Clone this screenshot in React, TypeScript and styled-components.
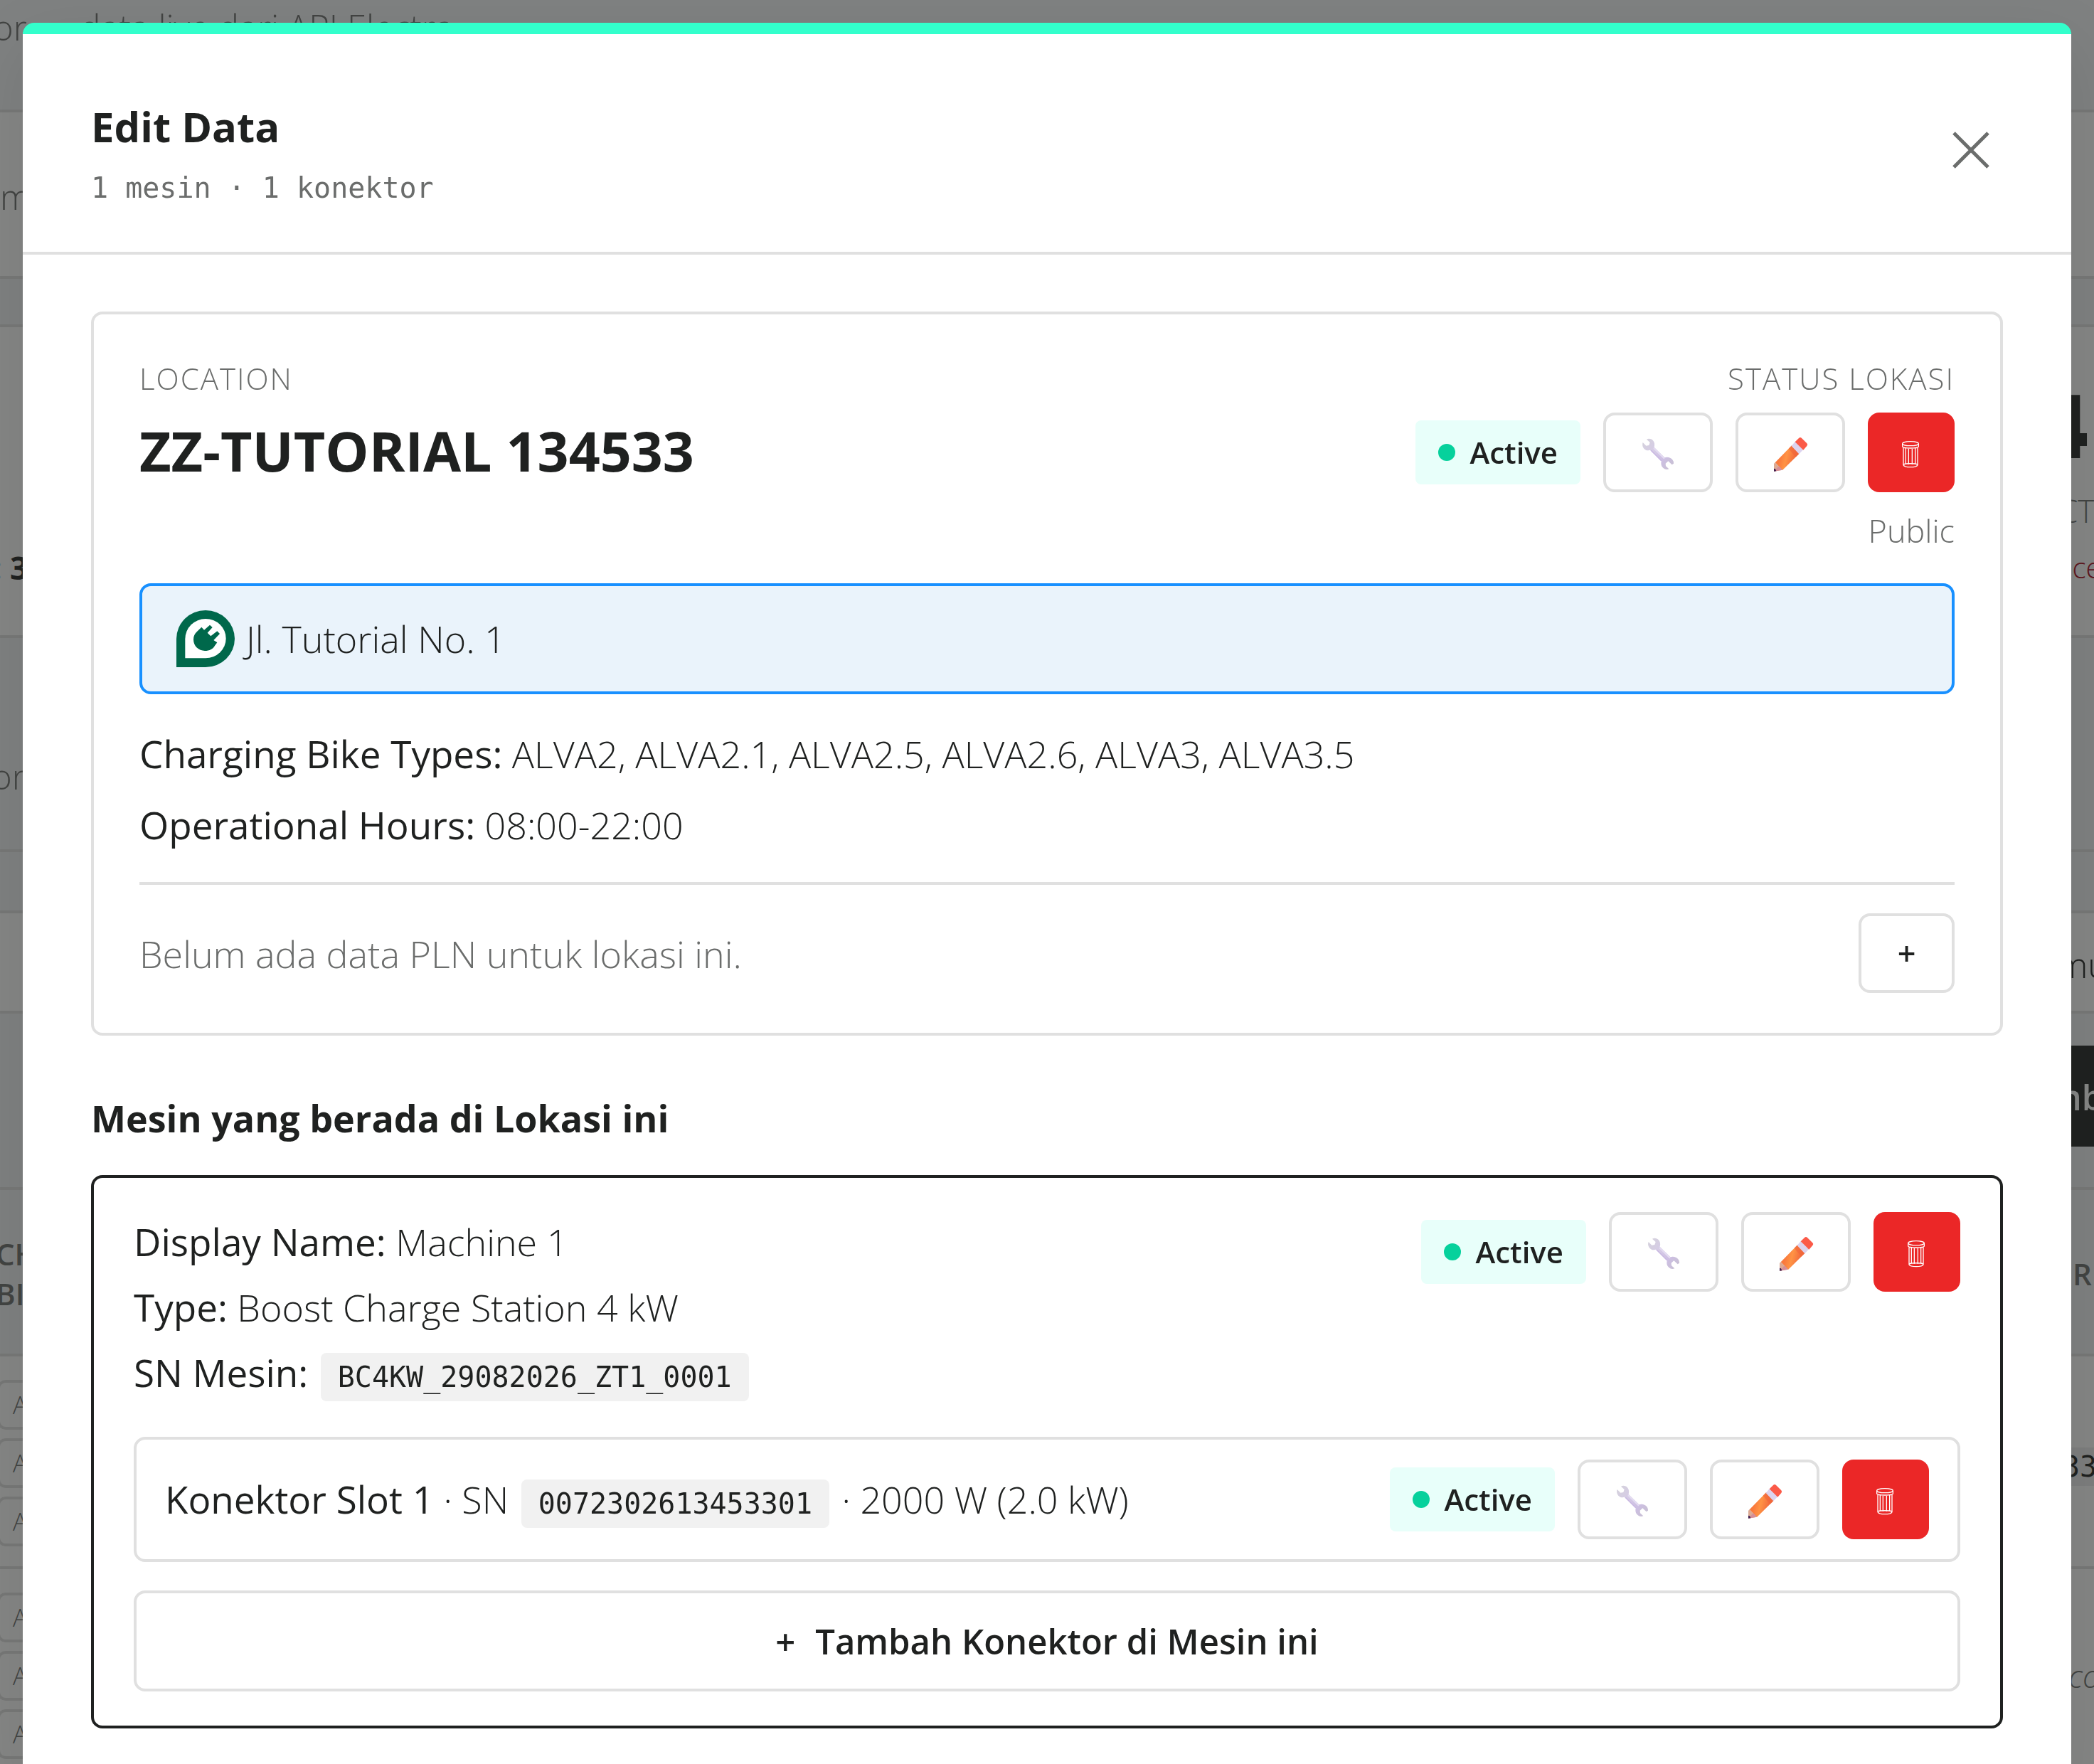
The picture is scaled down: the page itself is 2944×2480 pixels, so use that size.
import React from "react";
import styled, { createGlobalStyle } from "styled-components";

const INK = "#1f2120";
const MUTED = "#6b6d6c";
const LINE = "#e0e0e0";
const SANS = '"Open Sans", "Noto Sans", sans-serif';
const MONO = '"DejaVu Sans Mono", "Liberation Mono", monospace';

const GlobalStyle = createGlobalStyle`
  *, *::before, *::after { box-sizing: border-box; }
  html, body { margin: 0; height: 100%; overflow: hidden; }
  body {
    background: #f7f8fa;
    color: ${INK};
    font-family: ${SANS};
    font-size: 52px;
    font-weight: 300;
  }
  h1, h2, h3, p { margin: 0; }
  button { font: inherit; color: inherit; cursor: pointer; }
`;

/* ---------- dashboard behind the dialog ---------- */

const Page = styled.main`
  height: 100vh;
  overflow: hidden;
`;

const Band = styled.section<{ $height: number; $card?: boolean }>`
  display: flex;
  justify-content: space-between;
  height: ${(p) => p.$height}px;
  border-bottom: 4px solid ${LINE};
  background: ${(p) => (p.$card ? "#ffffff" : "#f2f3f5")};
  overflow: hidden;
  white-space: nowrap;
`;

const Side = styled.div<{ $top?: number; $gap?: number; $end?: boolean }>`
  display: flex;
  flex-direction: column;
  flex: none;
  gap: ${(p) => p.$gap ?? 0}px;
  width: ${(p) => (p.$end ? "96px" : "auto")};
  padding-top: ${(p) => p.$top ?? 0}px;
`;

const Snippet = styled.span<{ $size?: number; $weight?: number; $color?: string; $italic?: boolean; $indent?: number }>`
  margin-left: ${(p) => p.$indent ?? 0}px;
  font-size: ${(p) => p.$size ?? 49}px;
  line-height: 56px;
  font-weight: ${(p) => p.$weight ?? 300};
  font-style: ${(p) => (p.$italic ? "italic" : "normal")};
  color: ${(p) => p.$color ?? MUTED};
`;

const BigNumber = styled.span`
  align-self: flex-end;
  padding-right: 8px;
  font-size: 124px;
  line-height: 140px;
  font-weight: 800;
`;

const DarkButton = styled.div`
  height: 142px;
  padding: 44px 0 0 32px;
  background: ${INK};
  color: #ffffff;
  font-size: 49px;
  line-height: 56px;
  font-weight: 600;
`;

const SerialCell = styled.span`
  height: 54px;
  padding-left: 52px;
  background: #ececee;
  font-family: ${MONO};
  font-size: 40px;
  line-height: 54px;
  color: ${INK};
`;

const Pills = styled.div`
  display: flex;
  flex-direction: column;
  gap: 12px;
`;

const Pill = styled.span`
  height: 70px;
  width: 200px;
  margin-left: -4px;
  padding-left: 18px;
  border: 4px solid ${LINE};
  border-radius: 12px;
  font-size: 34px;
  line-height: 62px;
  color: ${MUTED};
`;

/* ---------- dialog ---------- */

const Overlay = styled.div`
  position: fixed;
  inset: 0;
  padding: 32px 32px 0;
  background: rgba(32, 34, 32, 0.55);
  overflow: hidden;
`;

const Dialog = styled.div`
  min-height: 100%;
  border-top: 16px solid #33ffcc;
  border-radius: 16px 16px 0 0;
  background: #ffffff;
  box-shadow: 0 32px 96px rgba(0, 0, 0, 0.1);
`;

const DialogHeader = styled.header`
  display: flex;
  justify-content: space-between;
  align-items: flex-start;
  padding: 88px 96px 62px;
  border-bottom: 4px solid ${LINE};
`;

const HeaderText = styled.div`
  display: grid;
  gap: 16px;
`;

const DialogTitle = styled.h1`
  font-size: 58px;
  line-height: 84px;
  font-weight: 700;
`;

const Summary = styled.p`
  font-family: ${MONO};
  font-size: 40px;
  line-height: 56px;
  font-weight: 400;
  color: ${MUTED};
`;

const CloseButton = styled.button`
  display: grid;
  place-items: center;
  width: 90px;
  height: 150px;
  padding: 0;
  border: 0;
  background: none;
  color: ${MUTED};
`;

const DialogBody = styled.div`
  padding: 80px 96px;
`;

const LocationCard = styled.section`
  padding: 56px 64px;
  border: 4px solid ${LINE};
  border-radius: 16px;
`;

const SplitRow = styled.div`
  display: flex;
  justify-content: space-between;
  align-items: flex-start;
`;

const Stack = styled.div<{ $end?: boolean }>`
  display: flex;
  flex-direction: column;
  align-items: ${(p) => (p.$end ? "flex-end" : "flex-start")};
  gap: 12px;
`;

const Eyebrow = styled.span`
  font-size: 42px;
  line-height: 68px;
  padding-bottom: 2px;
  letter-spacing: 2px;
  text-transform: uppercase;
  color: ${MUTED};
`;

const LocationName = styled.h2`
  font-size: 77px;
  line-height: 108px;
  font-weight: 700;
`;

const Visibility = styled.span`
  font-size: 45px;
  line-height: 84px;
  color: ${MUTED};
`;

const Actions = styled.div`
  display: flex;
  align-items: center;
  gap: 32px;
`;

const StatusBadge = styled.span`
  display: flex;
  align-items: center;
  gap: 20px;
  padding: 12px 32px;
  border-radius: 8px;
  background: #e8fffa;
  font-size: 42px;
  line-height: 66px;
  font-weight: 600;

  &::before {
    content: "";
    width: 24px;
    height: 24px;
    border-radius: 50%;
    background: #06d19c;
  }
`;

const ActionButton = styled.button<{ $danger?: boolean; $width?: number }>`
  display: grid;
  place-items: center;
  width: ${(p) => p.$width ?? (p.$danger ? 122 : 154)}px;
  height: 112px;
  padding: 0;
  border: ${(p) => (p.$danger ? "0" : `4px solid ${LINE}`)};
  border-radius: 16px;
  background: ${(p) => (p.$danger ? "#eb2727" : "#ffffff")};
  font-size: 45px;
  line-height: 64px;
  font-weight: 600;
`;

const AddressBar = styled.div`
  display: flex;
  align-items: center;
  gap: 16px;
  margin-top: 32px;
  padding: 34px 48px;
  border: 4px solid #1890ff;
  border-radius: 16px;
  background: #eaf3fb;
  line-height: 80px;
`;

const Facts = styled.div<{ $gap: number }>`
  display: flex;
  flex-direction: column;
  gap: ${(p) => p.$gap}px;
`;

const LocationFacts = styled(Facts)`
  margin-top: 40px;
  padding-bottom: 36px;
  border-bottom: 4px solid ${LINE};
`;

const Fact = styled.p<{ $line: number }>`
  line-height: ${(p) => p.$line}px;
`;

const Label = styled.strong`
  font-size: 53px;
  font-weight: 400;
`;

const EmptyRow = styled.div`
  display: flex;
  justify-content: space-between;
  align-items: center;
  padding-top: 40px;
  color: ${MUTED};

  button { color: ${INK}; }
`;

const SectionTitle = styled.h2`
  margin: 72px 0 36px;
  font-size: 52px;
  line-height: 88px;
  font-weight: 700;
`;

const MachineCard = styled.section`
  padding: 48px 56px;
  border: 4px solid ${INK};
  border-radius: 16px;
`;

const Serial = styled.code`
  margin: 0 4px;
  padding: 11px 24px;
  border-radius: 8px;
  background: #f1f1f1;
  font-family: ${MONO};
  font-size: 40px;
  line-height: 60px;
  font-weight: 400;
`;

const ConnectorRow = styled.div`
  display: flex;
  justify-content: space-between;
  align-items: center;
  margin-top: 48px;
  padding: 28px 40px;
  border: 4px solid ${LINE};
  border-radius: 16px;
`;

const AddButton = styled.button`
  display: flex;
  justify-content: center;
  align-items: center;
  gap: 28px;
  width: 100%;
  height: 142px;
  margin-top: 40px;
  border: 4px solid ${LINE};
  border-radius: 16px;
  background: #ffffff;
  font-size: 49px;
  font-weight: 600;
`;

/* ---------- drawings ---------- */

const WrenchIcon = () => (
  <svg width="52" height="52" viewBox="198 120 156 156" aria-hidden="true">
    <defs>
      <linearGradient id="wrench" x1="210" y1="150" x2="342" y2="270" gradientUnits="userSpaceOnUse">
        <stop offset="0" stopColor="#d5d2dc" />
        <stop offset="0.35" stopColor="#d6cce6" />
        <stop offset="0.65" stopColor="#cdbfe3" />
        <stop offset="1" stopColor="#c6c0cf" />
      </linearGradient>
    </defs>
    <path
      fill="url(#wrench)"
      d="M228 143q9-5 18-1c11 4 17 16 15 28l-1 6 44 44 6-1c10-2 21 3 27 10q6 7 5 16l-7 5-16-15-11 10 1 11 13 12c-10 4-20 1-26-6-7-7-8-16-6-27l-48-47-7 2c-10 1-21-7-24-19q-2-8 1-15l14 14 12-2 4-12z"
    />
    <path d="M258 180l45 44" stroke="#e4dcf2" strokeWidth="6" fill="none" />
    <path d="M247 190l43 43" stroke="#c8b7e2" strokeWidth="4" fill="none" />
  </svg>
);

const PencilIcon = () => (
  <svg width="52" height="52" viewBox="753 120 156 156" overflow="visible" aria-hidden="true">
    <defs>
      <linearGradient id="pencil" x1="785" y1="215" x2="840" y2="240" gradientTransform="rotate(-12 810 215)" gradientUnits="userSpaceOnUse">
        <stop offset="0" stopColor="#f9793c" />
        <stop offset="0.45" stopColor="#ff9344" />
        <stop offset="1" stopColor="#f36f3d" />
      </linearGradient>
    </defs>
    <path fill="url(#pencil)" d="M838 168l30 36-70 69-31-32z" />
    <path fill="#f0643a" d="M838 168l30 36-14 14-30-36z" opacity="0.6" />
    <path fill="#dcaa94" d="M767 240l31 32-36 6v-32z" />
    <path fill="#d58e97" d="M783 256l15 16-36 6z" />
    <path fill="#42204f" d="M762 266l6 2 4 9-10 1z" />
    <path fill="#dcd3ee" d="M851 153l35 33-18 19-32-34z" />
    <path fill="#fb5a48" d="M867 138q6-6 12 0l22 22q5 5 0 11l-15 17-35-34z" />
  </svg>
);

const TrashIcon = () => (
  <svg width="52" height="52" viewBox="1263 120 156 156" fill="none" stroke="#ffffff" strokeWidth="4" aria-hidden="true">
    <ellipse cx="1338" cy="161" rx="34" ry="9" />
    <path d="M1304 161v13c2 8 66 8 68 0v-13M1308 179v72c4 12 56 12 60 0v-72M1308 249c8-5 52-5 60 0" />
    <path d="M1318 180v67M1330 182v66M1345 182v66M1358 180v67" />
  </svg>
);

const ChargerPin = () => (
  <svg width="82" height="80" viewBox="36 36 246 240" aria-hidden="true">
    <path fill="#00684b" d="M36 276V156A123 120 0 0 1 159 36A123 120 0 0 1 159 276Z" />
    <path fill="#ffffff" d="M73 238V157A86 85 0 0 1 159 72A86 83 0 0 1 159 238Z" />
    <path
      fill="#00684b"
      d="M142 107l11 12 24-21 11 10-21 23 14 14 27-21 11 11-26 27 15 10-10 13c-6 13-23 22-42 22-26 0-48-20-48-47 0-15 5-24 14-33z"
    />
  </svg>
);

const CloseIcon = () => (
  <svg width="56" height="56" viewBox="0 0 56 56" stroke="currentColor" strokeWidth="5" aria-hidden="true">
    <path d="M4 4l48 48M52 4L4 52" />
  </svg>
);

const ItemActions = ({ subject }: { subject: string }) => (
  <Actions>
    <StatusBadge>Active</StatusBadge>
    <ActionButton type="button" aria-label={`Maintenance ${subject}`}>
      <WrenchIcon />
    </ActionButton>
    <ActionButton type="button" aria-label={`Edit ${subject}`}>
      <PencilIcon />
    </ActionButton>
    <ActionButton type="button" $danger aria-label={`Hapus ${subject}`}>
      <TrashIcon />
    </ActionButton>
  </Actions>
);

const PillGroup = () => (
  <Pills>
    <Pill>A</Pill>
    <Pill>A</Pill>
    <Pill>A</Pill>
  </Pills>
);

const Dashboard = () => (
  <Page aria-hidden="true">
    <Band $height={158}>
      <Side $top={10}>
        <Snippet $indent={-10}>or — data live dari API Electra</Snippet>
      </Side>
    </Band>
    <Band $card $height={234}>
      <Side $top={90}>
        <Snippet>m</Snippet>
      </Side>
    </Band>
    <Band $height={68} />
    <Band $card $height={437}>
      <Side $top={310}>
        <Snippet $size={44} $weight={700} $color={INK} $indent={-10}>: 3</Snippet>
      </Side>
      <Side $end $top={66} $gap={24}>
        <BigNumber>4</BigNumber>
        <Snippet $size={44} $indent={46}>CT</Snippet>
        <Snippet $size={40} $color="#a8071a" $indent={42}>nce</Snippet>
      </Side>
    </Band>
    <Band $height={301}>
      <Side $top={166}>
        <Snippet $indent={-12}>or</Snippet>
      </Side>
    </Band>
    <Band $height={86} />
    <Band $card $height={141}>
      <Side />
      <Side $end $top={44}>
        <Snippet $color={INK} $indent={44}>mu</Snippet>
      </Side>
    </Band>
    <Band $height={248}>
      <Side />
      <Side $end $top={45}>
        <DarkButton>mb</DarkButton>
      </Side>
    </Band>
    <Band $height={234}>
      <Side $top={62}>
        <Snippet $size={42} $weight={600} $indent={-6}>CH</Snippet>
        <Snippet $size={42} $weight={600} $indent={-6}>BI</Snippet>
      </Side>
      <Side $end $top={90}>
        <Snippet $size={42} $weight={600} $indent={66}>R</Snippet>
      </Side>
    </Band>
    <Band $card $height={299}>
      <Side $top={33}>
        <PillGroup />
      </Side>
      <Side $end $top={128}>
        <SerialCell>33</SerialCell>
      </Side>
    </Band>
    <Band $card $height={320}>
      <Side $top={33}>
        <PillGroup />
      </Side>
      <Side $end $top={122}>
        <Snippet $size={44} $italic $indent={60}>co</Snippet>
      </Side>
    </Band>
  </Page>
);

export default function App() {
  return (
    <>
      <GlobalStyle />
      <Dashboard />
      <Overlay>
        <Dialog role="dialog" aria-modal="true" aria-labelledby="dialog-title">
          <DialogHeader>
            <HeaderText>
              <DialogTitle id="dialog-title">Edit Data</DialogTitle>
              <Summary>1 mesin · 1 konektor</Summary>
            </HeaderText>
            <CloseButton type="button" aria-label="Tutup">
              <CloseIcon />
            </CloseButton>
          </DialogHeader>
          <DialogBody>
            <LocationCard>
              <SplitRow>
                <Stack>
                  <Eyebrow>Location</Eyebrow>
                  <LocationName>ZZ-TUTORIAL 134533</LocationName>
                </Stack>
                <Stack $end>
                  <Eyebrow>Status Lokasi</Eyebrow>
                  <ItemActions subject="lokasi" />
                  <Visibility>Public</Visibility>
                </Stack>
              </SplitRow>
              <AddressBar>
                <ChargerPin />
                <span>Jl. Tutorial No. 1</span>
              </AddressBar>
              <LocationFacts $gap={12}>
                <Fact $line={88}>
                  <Label>Charging Bike Types:</Label> ALVA2, ALVA2.1, ALVA2.5, ALVA2.6, ALVA3, ALVA3.5
                </Fact>
                <Fact $line={88}>
                  <Label>Operational Hours:</Label> 08:00-22:00
                </Fact>
              </LocationFacts>
              <EmptyRow>
                <p>Belum ada data PLN untuk lokasi ini.</p>
                <ActionButton type="button" $width={135} aria-label="Tambah data PLN">
                  +
                </ActionButton>
              </EmptyRow>
            </LocationCard>

            <SectionTitle>Mesin yang berada di Lokasi ini</SectionTitle>

            <MachineCard>
              <SplitRow>
                <Facts $gap={8}>
                  <Fact $line={84}>
                    <Label>Display Name:</Label> Machine 1
                  </Fact>
                  <Fact $line={84}>
                    <Label>Type:</Label> Boost Charge Station 4 kW
                  </Fact>
                  <Fact $line={84}>
                    <Label>SN Mesin:</Label> <Serial>BC4KW_29082026_ZT1_0001</Serial>
                  </Fact>
                </Facts>
                <ItemActions subject="mesin" />
              </SplitRow>
              <ConnectorRow>
                <Fact $line={84}>
                  <Label>Konektor Slot 1</Label> · SN <Serial>0072302613453301</Serial> · 2000 W (2.0 kW)
                </Fact>
                <ItemActions subject="konektor" />
              </ConnectorRow>
              <AddButton type="button">
                <span>+</span>
                <span>Tambah Konektor di Mesin ini</span>
              </AddButton>
            </MachineCard>
          </DialogBody>
        </Dialog>
      </Overlay>
    </>
  );
}
